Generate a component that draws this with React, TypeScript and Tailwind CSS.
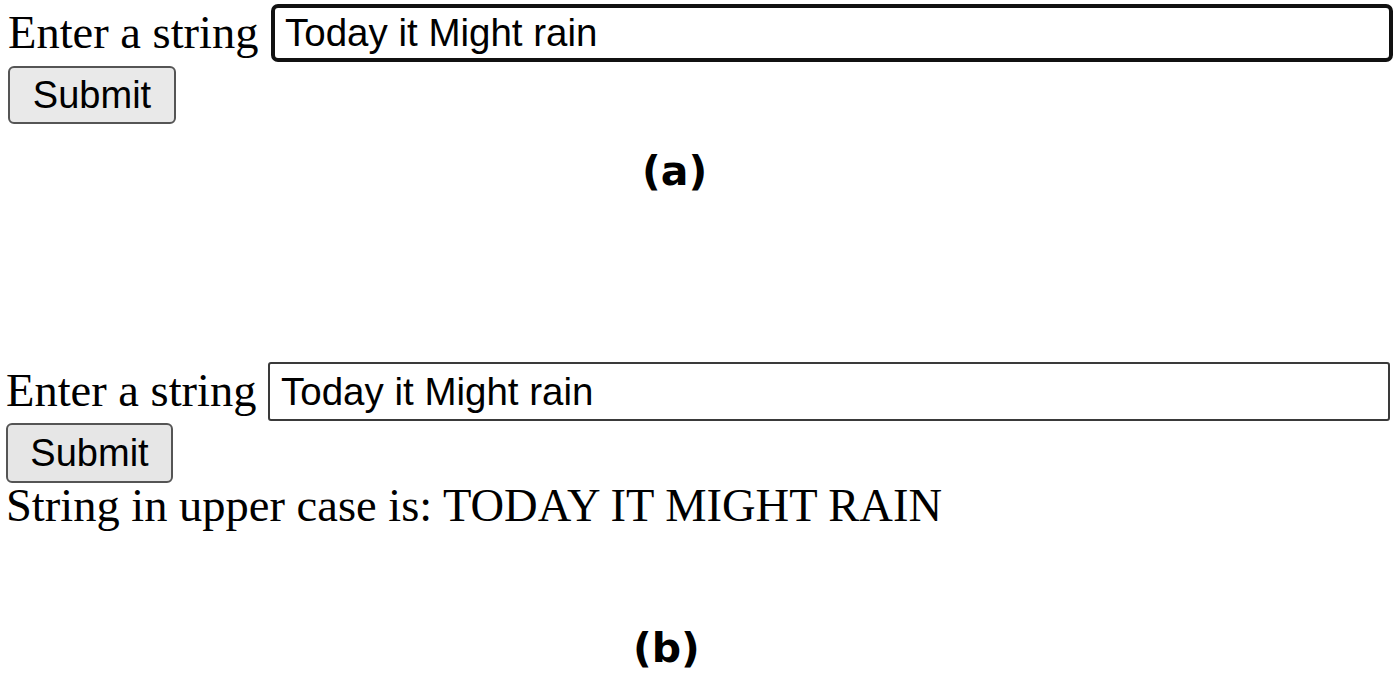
import React from "react";

export default function App() {
  return (
    <div className="w-[1400px] h-[682px] bg-white text-black overflow-hidden">
      {/* Section (a) */}
      <div className="pl-2 pt-1">
        <div className="flex items-center h-[58px]">
          <span className="w-[263px] shrink-0 text-[46.5px] leading-none font-['Liberation_Serif',serif] whitespace-nowrap">
            Enter a string
          </span>
          <div className="w-[1122px] h-[58px] border-4 border-[#111] rounded-[7px] flex items-center pl-[10px] bg-white">
            <span className="text-[38.5px] font-['Liberation_Sans',Arial,sans-serif] whitespace-nowrap">
              Today it Might rain
            </span>
          </div>
        </div>
        <button className="mt-1 w-[168px] h-[58px] bg-[#e9e9e9] border-2 border-[#555] rounded-[6px] text-[38px] font-['Liberation_Sans',Arial,sans-serif] flex items-center justify-center">
          Submit
        </button>
        <div className="mt-[27px] ml-[634px] text-[41px] leading-none font-bold font-['DejaVu_Sans',Verdana,sans-serif]">
          (a)
        </div>
      </div>

      {/* Section (b) */}
      <div className="pl-1.5 mt-[170px]">
        <div className="flex items-center h-[59px]">
          <span className="w-[262px] shrink-0 text-[46.5px] leading-none font-['Liberation_Serif',serif] whitespace-nowrap">
            Enter a string
          </span>
          <div className="w-[1122px] h-[59px] border-2 border-[#3a3a3a] rounded-[3px] flex items-center pl-[11px] bg-white">
            <span className="text-[38.5px] font-['Liberation_Sans',Arial,sans-serif] whitespace-nowrap">
              Today it Might rain
            </span>
          </div>
        </div>
        <button className="mt-[2px] w-[167px] h-[60px] bg-[#e6e6e6] border-2 border-[#555] rounded-[6px] text-[38px] font-['Liberation_Sans',Arial,sans-serif] flex items-center justify-center">
          Submit
        </button>
        <div className="text-[46.5px] leading-none font-['Liberation_Serif',serif] whitespace-nowrap">
          String in upper case is: TODAY IT MIGHT RAIN
        </div>
        <div className="mt-[98px] ml-[627px] text-[41px] leading-none font-bold font-['DejaVu_Sans',Verdana,sans-serif]">
          (b)
        </div>
      </div>
    </div>
  );
}
